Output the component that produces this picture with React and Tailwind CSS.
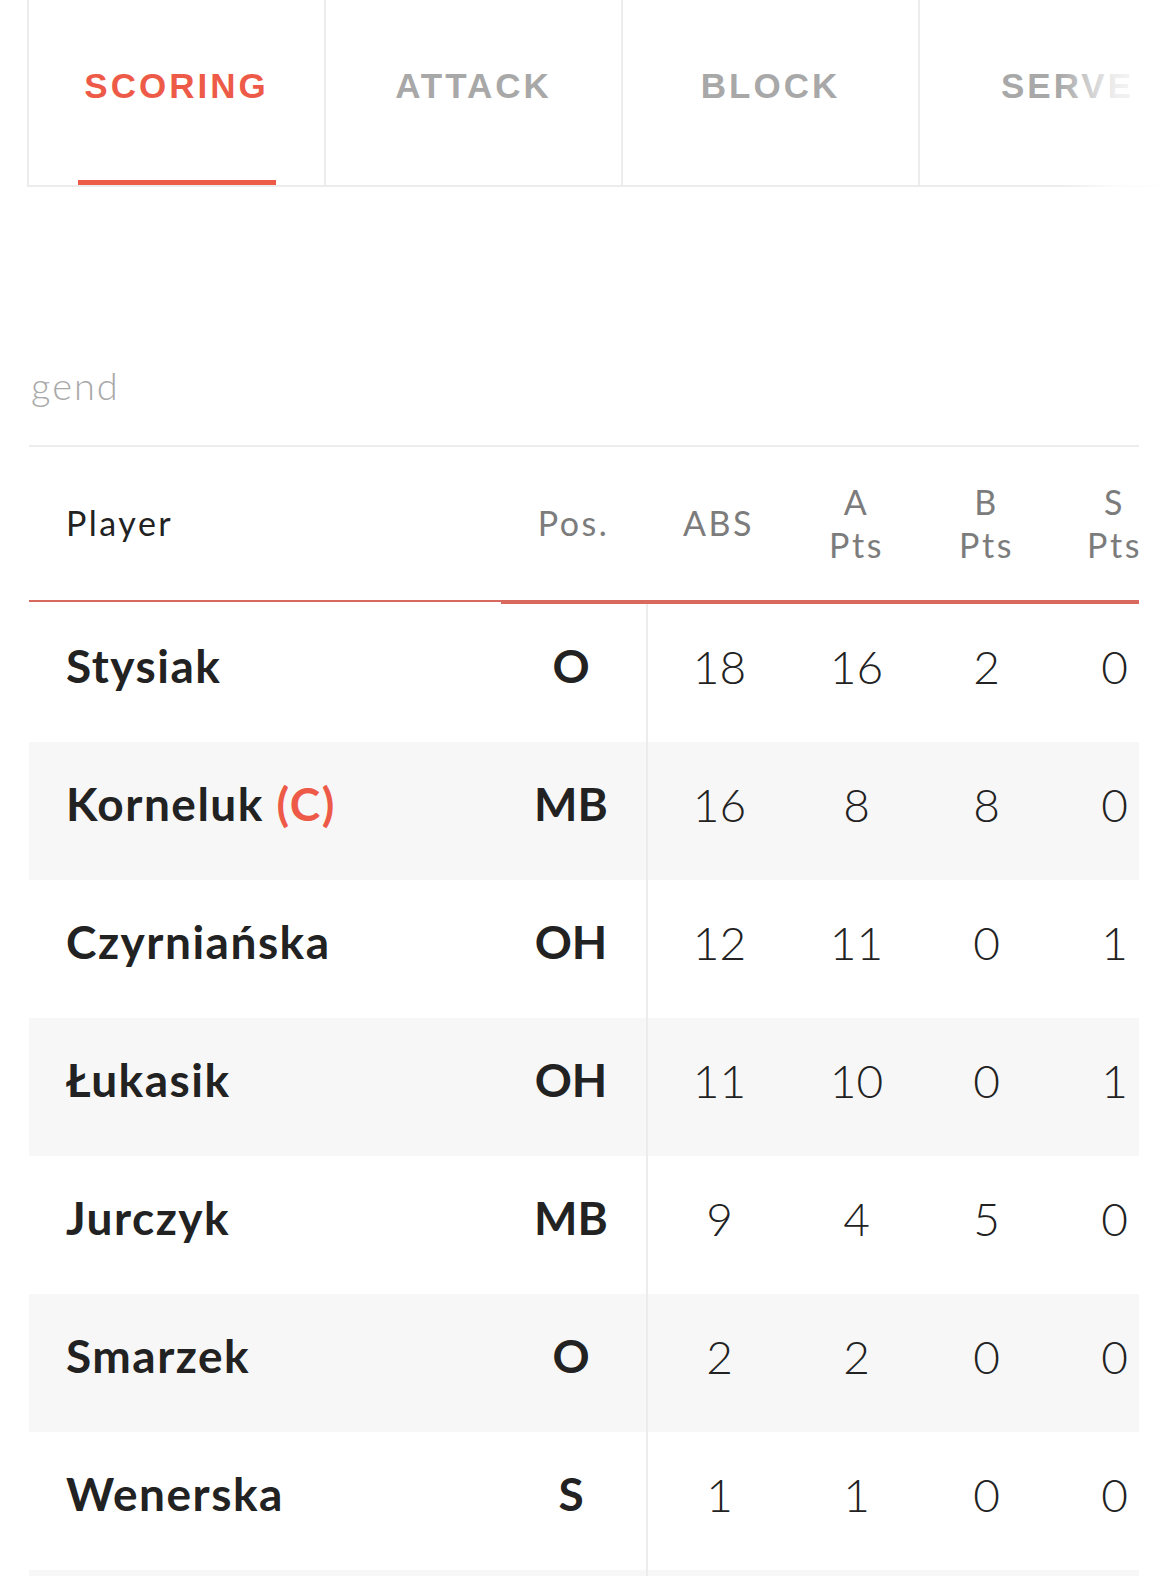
import React from "react";

const rows = [
  { name: "Stysiak", pos: "O", abs: 18, a: 16, b: 2, s: 0 },
  { name: "Korneluk", cap: true, pos: "MB", abs: 16, a: 8, b: 8, s: 0 },
  { name: "Czyrniańska", pos: "OH", abs: 12, a: 11, b: 0, s: 1 },
  { name: "Łukasik", pos: "OH", abs: 11, a: 10, b: 0, s: 1 },
  { name: "Jurczyk", pos: "MB", abs: 9, a: 4, b: 5, s: 0 },
  { name: "Smarzek", pos: "O", abs: 2, a: 2, b: 0, s: 0 },
  { name: "Wenerska", pos: "S", abs: 1, a: 1, b: 0, s: 0 },
  { name: "", pos: "", abs: "", a: "", b: "", s: "" },
];

const tabs = ["SCORING", "ATTACK", "BLOCK", "SERVE"];

export default function App() {
  return (
    <div
      className="relative w-[1169px] h-[1576px] overflow-hidden bg-white text-[#222]"
      style={{ fontFamily: "Lato, 'Noto Sans', sans-serif" }}
    >
      {/* Tabs */}
      <div className="relative ml-[27px] flex h-[187px] border-b-2 border-[#ececec]">
        {tabs.map((t, i) => (
          <div
            key={t}
            className={`relative flex h-full w-[297px] shrink-0 items-center justify-center border-l-2 border-[#ececec] pb-[12px] ${
              i === 0 ? "text-[#ee5a48]" : "text-[#a8a8a8]"
            }`}
          >
            <span
              className="text-[35px] font-bold tracking-[3px]"
              style={{ fontFamily: "'Liberation Sans', Arial, sans-serif" }}
            >
              {t}
            </span>
            {i === 0 && (
              <div className="absolute bottom-0 left-[49px] h-[5px] w-[198px] bg-[#ee5a48]" />
            )}
          </div>
        ))}
      </div>
      <div className="pointer-events-none absolute right-0 top-0 h-[192px] w-[110px] bg-gradient-to-r from-white/0 via-white/80 to-white" />

      {/* Legend */}
      <div className="mt-[179px] ml-[31px] h-[79px] text-[38px] font-light leading-none tracking-[2px] text-[#a9a9a9]">
        gend
      </div>

      {/* Table */}
      <div className="ml-[29px] w-[1110px] overflow-hidden">
        <div className="w-[1160px]">
          {/* header */}
          <div className="flex h-[155px] items-center border-t-2 border-[#ededed] pb-[2px] text-[34px] font-normal leading-[43px] tracking-[2.5px] text-[#7c7c7c]">
            <div className="w-[472px] pl-[37px] text-[#222]">Player</div>
            <div className="w-[145px] text-center">Pos.</div>
            <div className="w-[145px] text-center">ABS</div>
            <div className="w-[131px] text-center">
              A<br />Pts
            </div>
            <div className="w-[129px] text-center">
              B<br />Pts
            </div>
            <div className="w-[127px] text-center">
              S<br />Pts
            </div>
          </div>
          <div className="flex">
            <div className="h-[2px] w-[472px] bg-[#d9685e]" />
            <div className="h-[4px] flex-1 bg-[#d9685e]" />
          </div>
          {/* rows */}
          {rows.map((r, i) => (
            <div
              key={i}
              className={`flex h-[138px] items-center ${
                i % 2 === 1 ? "bg-[#f7f7f7]" : "bg-white"
              }`}
            >
              <div className="w-[472px] pl-[37px] pb-[16px] text-[46px] font-bold tracking-[1.5px]">
                {r.name}
                {r.cap && <span className="text-[#ee5a48]"> (C)</span>}
              </div>
              <div className="w-[145px] pb-[16px] pr-[5px] text-center text-[46px] font-bold">
                {r.pos}
              </div>
              <div className="flex h-full w-[145px] items-center justify-center border-l-2 border-[#ececec] pb-[14px] text-[46px] font-light">
                {r.abs}
              </div>
              <div className="w-[131px] pb-[14px] text-center text-[46px] font-light">{r.a}</div>
              <div className="w-[129px] pb-[14px] text-center text-[46px] font-light">{r.b}</div>
              <div className="w-[127px] pb-[14px] text-center text-[46px] font-light">{r.s}</div>
            </div>
          ))}
        </div>
      </div>
    </div>
  );
}
